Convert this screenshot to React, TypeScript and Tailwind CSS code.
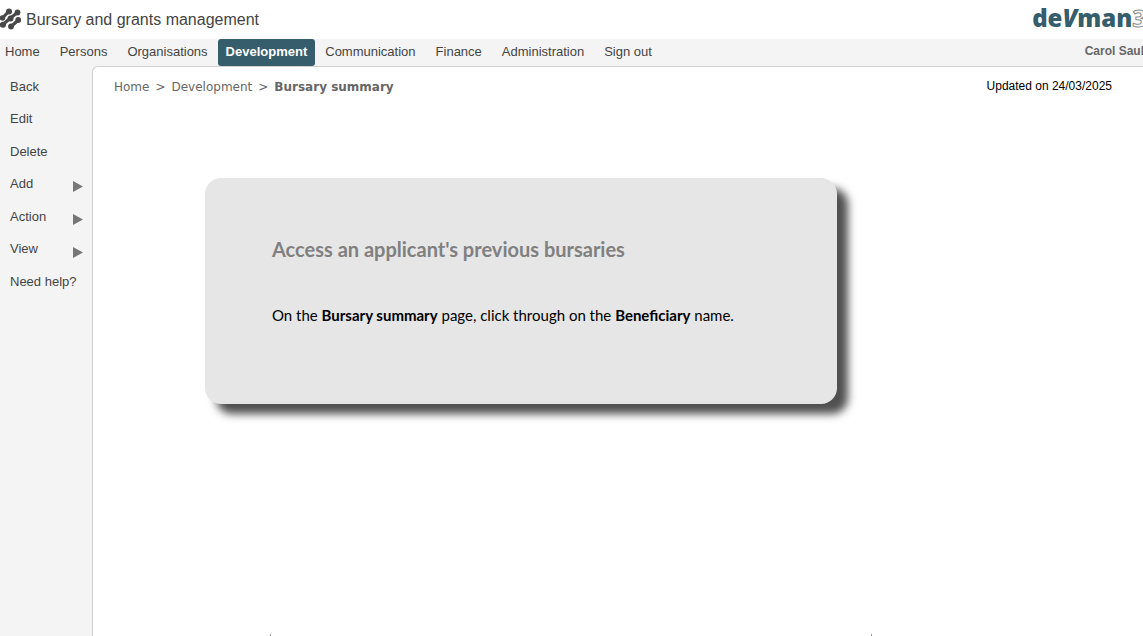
const navItems = [
  "Home",
  "Persons",
  "Organisations",
  "Development",
  "Communication",
  "Finance",
  "Administration",
  "Sign out",
];

const sideItems = [
  { label: "Back" },
  { label: "Edit" },
  { label: "Delete" },
  { label: "Add", menu: true },
  { label: "Action", menu: true },
  { label: "View", menu: true },
  { label: "Need help?" },
];

function Mark() {
  return (
    <svg className="h-6 w-[22px] shrink-0" viewBox="0 0 22 24" aria-hidden="true">
      <g stroke="#484848" strokeWidth="3.2" strokeLinecap="round" fill="none">
        <path d="M0 10 L3 9.500 L9 3" />
        <path d="M3 16.500 L10.500 10 L17.500 4.500" />
        <path d="M11 18.500 L18.500 12" />
        <path d="M0 17 L3 16.500" />
      </g>
      <g fill="#484848">
        <circle cx="9" cy="3.500" r="3" />
        <circle cx="17.500" cy="4.500" r="2.900" />
        <circle cx="2.500" cy="10" r="2.700" />
        <circle cx="10.500" cy="10.500" r="3" />
        <circle cx="18.200" cy="12" r="2.900" />
        <circle cx="3" cy="16.800" r="3" />
        <circle cx="11" cy="18.500" r="2.900" />
      </g>
    </svg>
  );
}

function Brand() {
  return (
    <a
      href="#"
      aria-label="devman3"
      className="-mr-[3px] flex items-baseline pb-1 font-['Open_Sans',sans-serif] text-2xl leading-7 font-extrabold text-[#355d6c]"
    >
      <span>de</span>
      <span className="italic">V</span>
      <span>man</span>
      <span className="font-bold text-white [-webkit-text-stroke:1px_#8a8a8a]">3</span>
    </a>
  );
}

export default function App() {
  return (
    <div className="flex min-h-screen flex-col overflow-hidden bg-[#f4f4f4] font-['Liberation_Sans',Arial,sans-serif] text-[13px] text-[#444444]">
      <header className="flex h-[39px] items-center justify-between bg-white">
        <div className="flex items-center gap-1">
          <Mark />
          <h1 className="text-base">Bursary and grants management</h1>
        </div>
        <Brand />
      </header>

      <nav className="flex h-[27px] items-stretch justify-between">
        <ul className="-ml-[5px] flex">
          {navItems.map((item) => (
            <li key={item} className="flex">
              <a
                href="#"
                className={
                  item === "Development"
                    ? "flex items-center rounded-[3px] bg-[#355d6c] px-2 pb-0.5 font-bold text-white"
                    : "flex items-center px-[10px] pb-0.5"
                }
              >
                {item}
              </a>
            </li>
          ))}
        </ul>
        <span className="-mr-px flex items-center pb-1 text-xs font-bold text-[#666666]">Carol Saul</span>
      </nav>

      <div className="flex grow">
        <aside className="w-[92px] shrink-0 pt-1">
          <ul className="grid h-[228px] grid-rows-7">
            {sideItems.map((item) => (
              <li key={item.label} className="flex">
                <a href="#" className="flex grow items-center justify-between pr-[9px] pl-[10px]">
                  {item.label}
                  {item.menu && (
                    <svg className="mt-1.5 h-[11px] w-[10px]" viewBox="0 0 10 11" aria-hidden="true">
                      <path d="M0 0 L10 5.500 L0 11 Z" fill="#777777" />
                    </svg>
                  )}
                </a>
              </li>
            ))}
          </ul>
        </aside>

        <main className="flex grow flex-col rounded-tl-md border-t border-l border-[#d0d0d0] bg-white">
          <div className="flex items-start justify-between pt-3 pr-[31px] pl-[21px]">
            <ol className="flex gap-1.5 font-['DejaVu_Sans',Verdana,sans-serif] text-xs text-[#666666]">
              <li><a href="#">Home</a></li>
              <li aria-hidden="true">&gt;</li>
              <li><a href="#">Development</a></li>
              <li aria-hidden="true">&gt;</li>
              <li className="font-bold" aria-current="page">Bursary summary</li>
            </ol>
            <p className="text-xs leading-[14px] text-black">Updated on 24/03/2025</p>
          </div>

          <section className="mt-[83px] ml-[112px] h-[226px] w-[632px] rounded-2xl bg-[#e6e6e6] px-[67px] pt-[57px] font-['Lato',sans-serif] shadow-[11px_10px_9px_#505050]">
            <h2 className="text-xl leading-7 font-bold text-[#808080]">
              Access an applicant's previous bursaries
            </h2>
            <p className="mt-10 text-[15px] leading-6 text-black">
              On the <b>Bursary summary</b> page, click through on the <b>Beneficiary</b> name.
            </p>
          </section>

          <div className="mt-auto ml-[177px] h-0.5 w-[602px] border-x border-[#999999]" />
        </main>
      </div>
    </div>
  );
}
